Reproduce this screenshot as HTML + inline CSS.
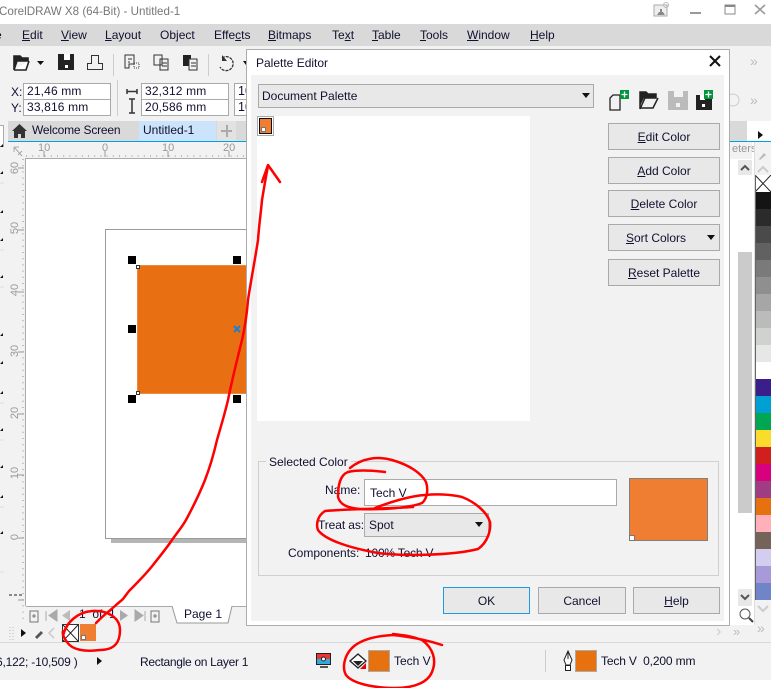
<!DOCTYPE html>
<html><head><meta charset="utf-8">
<style>
html,body{margin:0;padding:0;background:#fff}
#r{position:relative;width:771px;height:688px;overflow:hidden;background:#fff;font-family:"Liberation Sans",sans-serif;font-size:12px;color:#101030}
#r div,#r span.a{position:absolute;box-sizing:border-box}
.t{position:absolute;white-space:nowrap;line-height:16px;height:16px}
.f{background:#fff;border:1px solid #a9a9a9;padding-left:3px;line-height:15px;white-space:nowrap;overflow:hidden;font-size:12.5px}
.b{background:#e8e8e8;border:1px solid #a9a9a9;text-align:center;font-size:12px;line-height:24px;color:#101030}
.h{background:#000;width:8px;height:8px}
.rl{font-size:11px;color:#999}
.v{transform:rotate(-90deg);transform-origin:center}
u{text-decoration:underline}
svg{position:absolute}
</style></head><body><div id="r">
<!-- title -->
<div class="t" style="left:-1px;top:4px;font-size:11.6px;color:#777">CorelDRAW X8 (64-Bit) - Untitled-1</div>
<svg style="left:650px;top:0" width="121" height="24" viewBox="0 0 121 24"><rect x="4" y="5" width="13" height="11" fill="#eee" stroke="#aaa"/><path d="M7 15l2-3h1v-3h2v3h1l2 3z" fill="#888"/><circle cx="16" cy="5" r="2.5" fill="none" stroke="#bbb"/><rect x="40" y="12" width="11" height="2" fill="#999"/><rect x="75" y="5" width="10" height="9" fill="none" stroke="#888"/><rect x="75" y="5" width="10" height="2" fill="#888"/><path d="M105 5l10 9M115 5l-10 9" stroke="#999" stroke-width="1.6"/></svg>
<!-- menu -->
<div style="left:0;top:24px;width:771px;height:22px;background:#d9d9d9"></div>
<div class="t" style="left:-5px;top:27px">e</div>
<div class="t" style="left:22px;top:27px"><u>E</u>dit</div>
<div class="t" style="left:61px;top:27px"><u>V</u>iew</div>
<div class="t" style="left:105px;top:27px"><u>L</u>ayout</div>
<div class="t" style="left:160px;top:27px">Ob<u>j</u>ect</div>
<div class="t" style="left:214px;top:27px">Effe<u>c</u>ts</div>
<div class="t" style="left:268px;top:27px"><u>B</u>itmaps</div>
<div class="t" style="left:332px;top:27px">Te<u>x</u>t</div>
<div class="t" style="left:372px;top:27px"><u>T</u>able</div>
<div class="t" style="left:420px;top:27px"><u>T</u>ools</div>
<div class="t" style="left:467px;top:27px"><u>W</u>indow</div>
<div class="t" style="left:530px;top:27px"><u>H</u>elp</div>
<!-- toolbars -->
<div style="left:0;top:46px;width:771px;height:75px;background:#f2f2f2"></div>
<svg style="left:0;top:46px" width="250" height="34" viewBox="0 0 250 34">
<path d="M14 24V10h6l2 2h6v3H17l-3 9zM14 24h12l3-9" fill="#fff" stroke="#222" stroke-width="1.6"/><path d="M14 10h6l2 2h6v3H17l-3 9z" fill="#222"/>
<path d="M37 15h7l-3.500 4z" fill="#111"/>
<path d="M58 8h16v16H58z" fill="#222"/><rect x="64" y="8" width="6" height="6" fill="#fff"/><rect x="65" y="19" width="3" height="3" fill="#fff"/>
<path d="M87.500 23.500h15v-6h-4v-8h-7v8h-4z" fill="none" stroke="#333"/>
<rect x="113" y="8" width="1" height="22" fill="#ccc"/>
<path d="M125 9h9v9h-5v4h-4zM128 13h4M128 16h2" fill="none" stroke="#333"/><path d="M134 22h5v-5h-5z" fill="none" stroke="#444" stroke-dasharray="1 1"/>
<path d="M154 9h8v10h-8zM160 13h8v11h-8zM162 17h5M162 20h5" fill="#f2f2f2" stroke="#333"/>
<path d="M183 9h8v11h-8z" fill="#222"/><path d="M189 13h8v11h-8zM191 17h5M191 20h5" fill="#f2f2f2" stroke="#333"/>
<rect x="208" y="8" width="1" height="22" fill="#ccc"/>
<path d="M222 12a7 7 0 1 1-2 9" fill="none" stroke="#333" stroke-width="1.300" stroke-dasharray="3 1"/><path d="M222 9v6h5z" fill="#333"/>
<path d="M243 15h6l-3 4z" fill="#111"/>
</svg>
<div style="left:117px;top:80px;width:1px;height:36px;background:#ccc"></div>
<div class="t" style="left:11px;top:84px;font-size:12px">X:</div>
<div class="t" style="left:11px;top:100px;font-size:12px">Y:</div>
<div class="f" style="left:23px;top:83px;width:88px;height:17px;font-size:12px;letter-spacing:.15px">21,46 mm</div>
<div class="f" style="left:23px;top:99px;width:88px;height:17px;font-size:12px;letter-spacing:.15px">33,816 mm</div>
<svg style="left:124px;top:84px" width="16" height="32"><path d="M3 5v5M13 5v5M3 7.500h10" stroke="#333" stroke-width="1.500"/><path d="M8 15v14M5 15h6M5 29h6" stroke="#333" stroke-width="1.500" fill="none"/></svg>
<div class="f" style="left:141px;top:83px;width:88px;height:17px;font-size:12px;letter-spacing:.15px">32,312 mm</div>
<div class="f" style="left:141px;top:99px;width:88px;height:17px;font-size:12px;letter-spacing:.15px">20,586 mm</div>
<div class="f" style="left:234px;top:83px;width:20px;height:17px">10</div>
<div class="f" style="left:234px;top:99px;width:20px;height:17px">10</div>
<div class="t" style="left:750px;top:53px;font-size:14px;color:#bbb">»</div>
<div class="t" style="left:750px;top:92px;font-size:14px;color:#bbb">»</div>
<svg style="left:729px;top:90px" width="14" height="20"><circle cx="4" cy="10" r="6" fill="none" stroke="#ccc"/></svg>
<!-- left toolbox -->
<div style="left:0;top:121px;width:8px;height:520px;background:#f2f2f2"></div>
<div style="left:0;top:125px;width:4px;height:22px;background:#fff;border:1px solid #aaa;border-left:0"></div>
<svg style="left:0;top:140px" width="5" height="500"><path d="M0 7l3-3v3zM0 34l3-3v3zM0 73l3-3v3zM0 101l3-3v3zM0 138l3-3v3zM0 196l3-3v3zM0 224l3-3v3zM0 254l3-3v3zM0 291l3-3v3zM0 328l3-3v3zM0 358l3-3v3zM0 394l3-3v3z" fill="#111"/><path d="M0 43h4M0 110h4M0 147h4M0 263h4M0 300h4M0 367h4M0 432h4" stroke="#ddd"/></svg>
<!-- tabs -->
<div style="left:8px;top:121px;width:739px;height:20px;background:#d9d9d9"></div>
<div style="left:8px;top:141px;width:763px;height:1px;background:#00a0e4"></div>
<svg style="left:12px;top:123px" width="16" height="16"><path d="M0 8L7.500 1 15 8h-2v7H9v-4H6v4H2V8z" fill="#333"/></svg>
<div class="t" style="left:32px;top:122px;font-size:12px;letter-spacing:-.2px">Welcome Screen</div>
<div style="left:139px;top:121px;width:77px;height:20px;background:#cce4fb"></div>
<div class="t" style="left:143px;top:122px;font-size:12px">Untitled-1</div>
<div style="left:217px;top:121px;width:19px;height:20px;background:#e2e2e2"></div>
<div style="left:221px;top:130px;width:11px;height:2px;background:#aaa"></div>
<div style="left:225.500px;top:125px;width:2px;height:12px;background:#aaa"></div>
<!-- ruler -->
<div style="left:8px;top:142px;width:240px;height:483px;background:#f2f2f2"></div>
<svg style="left:8px;top:142px" width="240" height="500" viewBox="0 0 240 500">
<path d="M6 5l8 9M6 5h5M6 5v5M10 13l4-4" stroke="#aaa" fill="none"/>
<path d="M36 9v6M97 9v6M160 9v6M221 9v6" stroke="#999"/>
<path d="M18 14h220" stroke="#888" stroke-dasharray="1 5.200"/>
<path d="M15 17v465" stroke="#888" stroke-dasharray="1 5.200"/>
<path d="M10 26h6M10 88h6M10 150h6M10 210h6M10 272h6M10 333h6M10 396h6M10 458h6" stroke="#999"/>
<path d="M1 453h14" stroke="#222" stroke-dasharray="3 2"/>
</svg>
<div class="t rl" style="left:38px;top:140px">10</div>
<div class="t rl" style="left:102px;top:140px">0</div>
<div class="t rl" style="left:162px;top:140px">10</div>
<div class="t rl" style="left:223px;top:140px">20</div>
<div class="t rl v" style="left:7px;top:160px;width:16px;text-align:center">60</div>
<div class="t rl v" style="left:7px;top:220px;width:16px;text-align:center">50</div>
<div class="t rl v" style="left:7px;top:282px;width:16px;text-align:center">40</div>
<div class="t rl v" style="left:7px;top:343px;width:16px;text-align:center">30</div>
<div class="t rl v" style="left:7px;top:405px;width:16px;text-align:center">20</div>
<div class="t rl v" style="left:7px;top:465px;width:16px;text-align:center">10</div>
<div class="t rl v" style="left:7px;top:529px;width:16px;text-align:center">0</div>
<!-- canvas -->
<div style="left:25px;top:158px;width:225px;height:448px;background:#fff;border:1px solid #aaa;border-right:0;border-bottom:0"></div>
<div style="left:111px;top:539px;width:137px;height:4px;background:#b5b5b5"></div>
<div style="left:105px;top:229px;width:145px;height:310px;background:#fff;border:1px solid #9a9a9a;border-right:0"></div>
<div style="left:137px;top:265px;width:112px;height:129px;background:#e87012;border:1px solid #ef8a3c"></div>
<div class="h" style="left:128px;top:256px"></div><div class="h" style="left:233px;top:256px"></div>
<div class="h" style="left:128px;top:325px"></div><div class="h" style="left:128px;top:395px"></div><div class="h" style="left:233px;top:395px"></div>
<div style="left:136px;top:265px;width:4px;height:4px;background:#fff;border:1px solid #333"></div>
<div style="left:136px;top:391px;width:4px;height:4px;background:#fff;border:1px solid #333"></div>
<svg style="left:233px;top:325px" width="8" height="8"><path d="M1 1l6 6M7 1l-6 6" stroke="#1b7fd8" stroke-width="2"/></svg>
<!-- page tabs -->
<div style="left:26px;top:606px;width:222px;height:19px;background:#f2f2f2;border-top:1px solid #aaa"></div>
<svg style="left:26px;top:606px" width="222" height="19" viewBox="0 0 222 19">
<path d="M4 5h8v11H4zM6 10h4M8 8v4" fill="none" stroke="#777"/>
<path d="M20 5v10M31 4v11l-8-5.500z" fill="#aaa" stroke="#aaa"/><path d="M44 4v11l-8-5.500z" fill="#bbb"/>
<path d="M94 4v11l8-5.500z" fill="#aaa"/><path d="M109 4v11l8-5.500zM119 5v10" fill="#aaa" stroke="#aaa"/>
<path d="M125 5h8v11h-8zM127 10h4M129 8v4" fill="none" stroke="#777"/>
<path d="M146 0l5 17h51l4-17" fill="#fff" stroke="#999"/>
</svg>
<div class="t" style="left:79px;top:606px;font-size:12px">1&nbsp; of&nbsp; 1</div>
<div class="t" style="left:184px;top:606px;font-size:12px">Page 1</div>
<!-- right -->
<div style="left:729px;top:142px;width:27px;height:483px;background:#fff"></div>
<div style="left:729px;top:142px;width:23px;height:17px;background:#f2f2f2"></div>
<div class="t" style="left:732px;top:141px;font-size:11px;color:#999">eters</div>
<div style="left:738px;top:160px;width:14px;height:15px;background:#e8e8e8"></div>
<svg style="left:738px;top:160px" width="14" height="15"><path d="M3 10l4-4 4 4" stroke="#555" stroke-width="2" fill="none"/></svg>
<div style="left:738px;top:252px;width:14px;height:261px;background:#cbcbcb"></div>
<div style="left:738px;top:589px;width:14px;height:17px;background:#e8e8e8"></div>
<svg style="left:738px;top:590px" width="14" height="15"><path d="M3 5l4 4 4-4" stroke="#555" stroke-width="2" fill="none"/></svg>
<svg style="left:738px;top:607px" width="16" height="16"><circle cx="7" cy="7" r="5" fill="none" stroke="#555"/><path d="M11 11l4 4" stroke="#444" stroke-width="2"/></svg>
<div style="left:754px;top:142px;width:17px;height:500px;background:#f2f2f2;border-left:1px solid #ddd"></div>
<svg style="left:755px;top:129px" width="16" height="46"><path d="M3 2l5 4-5 4z" fill="#111"/><path d="M4 30l5-6 2 2-6 5z" fill="#bbb"/><path d="M3 43l5-5 5 5" stroke="#ccc" stroke-width="2" fill="none"/></svg>
<svg style="left:755px;top:175px" width="16" height="426" viewBox="0 0 16 426" shape-rendering="crispEdges">
<rect width="16" height="17" fill="#fff"/><path d="M0 0l16 17M16 0L0 17" stroke="#222" shape-rendering="auto"/>
<rect y="17" width="16" height="17" fill="#141414"/><rect y="34" width="16" height="17" fill="#2b2b2b"/><rect y="51" width="16" height="17" fill="#4a4a4a"/><rect y="68" width="16" height="17" fill="#616161"/><rect y="85" width="16" height="17" fill="#7a7a7a"/><rect y="102" width="16" height="17" fill="#8f8f8f"/><rect y="119" width="16" height="17" fill="#a6a6a6"/><rect y="136" width="16" height="17" fill="#bbb"/><rect y="153" width="16" height="17" fill="#d0d2d0"/><rect y="170" width="16" height="17" fill="#e6e7e6"/><rect y="187" width="16" height="17" fill="#fff"/><rect y="204" width="16" height="17" fill="#3a1f8a"/><rect y="221" width="16" height="17" fill="#009fd4"/><rect y="238" width="16" height="17" fill="#00a651"/><rect y="255" width="16" height="17" fill="#f9dc2c"/><rect y="272" width="16" height="17" fill="#d01f1c"/><rect y="289" width="16" height="17" fill="#d9007e"/><rect y="306" width="16" height="17" fill="#a03c82"/><rect y="323" width="16" height="17" fill="#e8710f"/><rect y="340" width="16" height="17" fill="#ffb0b8"/><rect y="357" width="16" height="17" fill="#736358"/><rect y="374" width="16" height="17" fill="#d3cdef"/><rect y="391" width="16" height="17" fill="#a899d8"/><rect y="408" width="16" height="17" fill="#6f85c7"/>
<rect x="0" y="0" width="1" height="425" fill="#666"/>
</svg>
<svg style="left:755px;top:602px" width="16" height="40"><path d="M3 4l5 5 5-5" stroke="#ccc" stroke-width="2" fill="none"/></svg>
<div class="t" style="left:757px;top:620px;font-size:14px;color:#bbb">»</div>
<!-- doc palette row -->
<div style="left:0;top:625px;width:755px;height:17px;background:#f2f2f2"></div>
<div class="t" style="left:716px;top:624px;font-size:16px;color:#ccc">›</div>
<div class="t" style="left:733px;top:624px;font-size:13px;color:#bbb">»</div>
<svg style="left:8px;top:625px" width="50" height="17"><path d="M2 2v13M5 2v13" stroke="#bbb" stroke-dasharray="1 2"/><path d="M13 4l5 4-5 4z" fill="#111"/><path d="M27 12l6-6 2 2-6 6z" fill="#555"/><path d="M46 3l-5 5 5 5" stroke="#ccc" stroke-width="1.600" fill="none"/></svg>
<svg style="left:62px;top:624px" width="17" height="18"><rect x=".5" y=".5" width="16" height="17" fill="#fff" stroke="#333"/><path d="M1 1l15 16M16 1L1 17" stroke="#222"/></svg>
<div style="left:80px;top:624px;width:16px;height:17px;background:#ef7d32"></div>
<div style="left:81px;top:635px;width:5px;height:5px;background:#fff;border:1px solid #777"></div>
<!-- status -->
<div style="left:0;top:642px;width:771px;height:38px;background:#f2f2f2;border-top:1px solid #d9d9d9"></div>
<div class="t" style="left:-4px;top:654px;font-size:12px;letter-spacing:-.2px">6,122; -10,509 )</div>
<svg style="left:96px;top:656px" width="8" height="10"><path d="M1 1l5 4-5 4z" fill="#111"/></svg>
<div class="t" style="left:140px;top:654px;font-size:12px;letter-spacing:-.3px">Rectangle on Layer 1</div>
<svg style="left:315px;top:652px" width="18" height="18"><rect x="1.500" y="1.500" width="14" height="11" fill="#fff" stroke="#222"/><rect x="2" y="2" width="13" height="5" fill="#e33"/><rect x="2" y="7" width="13" height="5" fill="#3ad"/><circle cx="8.500" cy="7" r="2" fill="#fff" stroke="#222"/><path d="M5 15h8" stroke="#222" stroke-width="1.500"/></svg>
<svg style="left:349px;top:652px" width="18" height="18"><path d="M1 9l8-7 8 7-8 7z" fill="#fff" stroke="#222" stroke-width="1.400"/><path d="M4 9h10l-5 5z" fill="#222"/><path d="M17 11v6h-6z" fill="#e00"/></svg>
<div style="left:368px;top:650px;width:22px;height:22px;background:#e8710f;border:1px solid #aaa"></div>
<div class="t" style="left:394px;top:653px;font-size:12px">Tech V</div>
<div style="left:545px;top:650px;width:1px;height:22px;background:#ccc"></div>
<svg style="left:561px;top:650px" width="14" height="22"><path d="M7 1l4 9-2 5H5l-2-5z" fill="#fff" stroke="#222"/><path d="M7 1v8" stroke="#222"/><rect x="4.500" y="15.500" width="5" height="5" fill="#fff" stroke="#222"/></svg>
<div style="left:575px;top:650px;width:22px;height:22px;background:#e8710f;border:1px solid #aaa"></div>
<div class="t" style="left:601px;top:653px;font-size:12px;letter-spacing:-.15px">Tech V&nbsp; 0,200 mm</div>
<!-- dialog -->
<div style="left:246px;top:49px;width:484px;height:577px;background:#fff;border:1px solid #adadad"></div>
<div style="left:251px;top:75px;width:473px;height:546px;background:#f2f2f2"></div>
<div class="t" style="left:256px;top:55px;font-size:12px">Palette Editor</div>
<svg style="left:708px;top:54px" width="14" height="14"><path d="M2 2l10 10M12 2L2 12" stroke="#111" stroke-width="2"/></svg>
<div style="left:258px;top:84px;width:336px;height:24px;background:#e8e8e8;border:1px solid #a9a9a9"></div>
<div class="t" style="left:262px;top:88px;font-size:12px">Document Palette</div>
<svg style="left:581px;top:92px" width="10" height="8"><path d="M1 1h8L5 6z" fill="#111"/></svg>
<svg style="left:608px;top:88px" width="112" height="24">
<path d="M5 7h7v15H2V10z" fill="none" stroke="#222" stroke-width="1.300"/><rect x="12" y="2" width="9" height="9" fill="#009639"/><path d="M16.500 3.500v6M13.500 6.500h6" stroke="#fff" stroke-width="1.300"/>
<path d="M32 20V4h6l2 2h8v4H37l-5 11zM32 20h13l5-10" fill="#f2f2f2" stroke="#222" stroke-width="1.500"/><path d="M32 4h6l2 2h8v4H36l-4 8z" fill="#222"/>
<rect x="60" y="3" width="20" height="19" fill="#bbb"/><rect x="66" y="3" width="9" height="6" fill="#f2f2f2"/><rect x="68" y="15" width="4" height="4" fill="#f2f2f2"/>
<rect x="88" y="7" width="16" height="15" fill="#222"/><rect x="92" y="7" width="5" height="5" fill="#fff"/><rect x="94" y="16" width="3" height="3" fill="#fff"/><rect x="96" y="2" width="9" height="9" fill="#009639"/><path d="M100.500 3.500v6M97.500 6.500h6" stroke="#fff" stroke-width="1.300"/>
</svg>
<div style="left:257px;top:116px;width:273px;height:305px;background:#fff"></div>
<div style="left:257px;top:116px;width:17px;height:20px;background:#fff;border:1px solid #aaa"></div>
<div style="left:259px;top:118px;width:13px;height:16px;background:#ef7d32;border:1px solid #111"></div>
<div style="left:261px;top:127px;width:5px;height:5px;background:#fff;border:1px solid #777"></div>
<div class="b" style="left:608px;top:123px;width:112px;height:27px;line-height:26px"><u>E</u>dit Color</div>
<div class="b" style="left:608px;top:157px;width:112px;height:27px;line-height:26px"><u>A</u>dd Color</div>
<div class="b" style="left:608px;top:190px;width:112px;height:27px;line-height:26px"><u>D</u>elete Color</div>
<div class="b" style="left:608px;top:224px;width:112px;height:27px;line-height:26px;padding-right:16px"><u>S</u>ort Colors</div>
<svg style="left:706px;top:234px" width="10" height="8"><path d="M1 1h8L5 6z" fill="#111"/></svg>
<div class="b" style="left:608px;top:259px;width:112px;height:27px;line-height:26px"><u>R</u>eset Palette</div>
<!-- selected color -->
<div style="left:258px;top:461px;width:461px;height:115px;border:1px solid #d0d0d0"></div>
<div class="t" style="left:266px;top:454px;font-size:12px;background:#f2f2f2;padding:0 3px">Selected Color</div>
<div class="t" style="left:325px;top:482px;font-size:12px">Name:</div>
<div style="left:364px;top:479px;width:253px;height:27px;background:#fff;border:1px solid #aaa"></div>
<div class="t" style="left:370px;top:485px;font-size:12px">Tech V</div>
<div class="t" style="left:318px;top:517px;font-size:12px;letter-spacing:-.1px">Treat as:</div>
<div style="left:364px;top:513px;width:125px;height:24px;background:#e8e8e8;border:1px solid #aaa"></div>
<div class="t" style="left:369px;top:517px;font-size:12px">Spot</div>
<svg style="left:474px;top:521px" width="10" height="8"><path d="M1 1h8L5 6z" fill="#111"/></svg>
<div class="t" style="left:288px;top:545px;font-size:12px">Components:</div>
<div class="t" style="left:365px;top:545px;font-size:12px;letter-spacing:-.2px">100% Tech V</div>
<div style="left:629px;top:478px;width:79px;height:63px;background:#ef7d32;border:1px solid #808080"></div>
<div style="left:629px;top:535px;width:6px;height:6px;background:#fff;border:1px solid #777"></div>
<div class="b" style="left:443px;top:587px;width:87px;height:27px;line-height:26px;border-color:#1e9be0">OK</div>
<div class="b" style="left:538px;top:587px;width:88px;height:27px;line-height:26px">Cancel</div>
<div class="b" style="left:633px;top:587px;width:87px;height:27px;line-height:26px"><u>H</u>elp</div>
<!-- annotations -->
<svg style="left:0;top:0" width="771" height="688" viewBox="0 0 771 688" fill="none" stroke="#f00" stroke-width="2.5" stroke-linecap="round" stroke-linejoin="round">
<path d="M96 623C100 619 104 615 108 612C114 607 118 603 122 600C125 597 127 593 130 590C138 582 146 574 153 565C160 556 166 549 172 540C177 533 182 527 186 520C193 507 199 495 205 480C210 467 214 453 217 440C221 426 225 413 228 400C232 380 237 360 242 340C245 327 247 313 248 300C251 280 255 260 258 240C259 225 261 212 262 200C264 188 266 176 268 166"/>
<path d="M262 182L268 165L280 182"/>
<path d="M63 636C66 622 78 612 92 611C108 610 120 618 120 630C120 642 115 650 100 650C85 652 72 650 67 642C64 638 62 634 63 631"/>
<path d="M385 472C370 470 355 470 348 472C340 475 338 485 338 497C340 505 348 508 360 509C380 510 410 508 422 503C428 498 428 488 426 482C422 474 410 465 392 460C378 456 362 458 350 468"/>
<path d="M413 507C380 509 345 509 325 511C317 516 316 525 318 530C325 540 350 548 378 553C400 556 450 556 478 549C488 542 491 530 490 522C487 512 475 502 462 497C450 494 435 494 425 495C410 496 390 502 375 508"/>
<path d="M442 645C430 641 412 637 393 635C375 636 360 640 352 648C344 656 342 668 346 675C352 683 372 688 395 688C415 688 428 682 432 672C437 660 433 648 422 640C412 636 402 635 393 634"/>
</svg>
</div></body></html>
